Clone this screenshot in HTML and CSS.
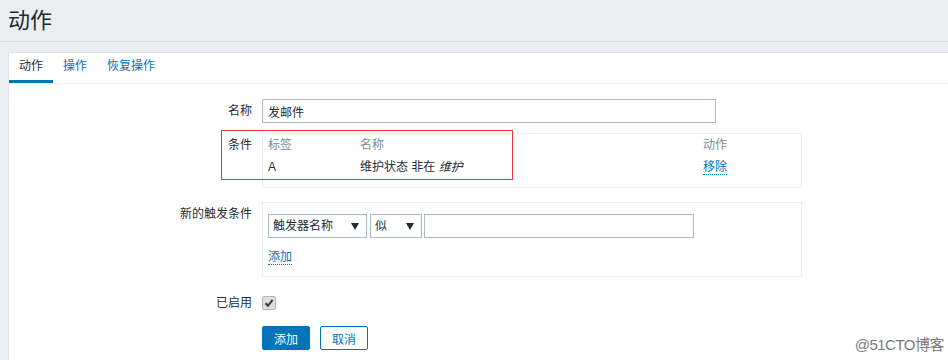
FILE: index.html
```html
<!DOCTYPE html>
<html lang="zh-CN">
<head>
    <meta charset="UTF-8">
    <title>动作</title>
    <link rel="stylesheet" href="styles.css">
</head>
<body>
    <div class="header">
        <h1>动作</h1>
    </div>
    <div class="panel">
        <ul class="tabs">
            <li class="active">动作</li>
            <li><a href="#">操作</a></li>
            <li><a href="#">恢复操作</a></li>
        </ul>
        <div class="form">
            <div class="row">
                <label class="lbl">名称</label>
                <div class="field"><input class="text name" type="text" value="发邮件"></div>
            </div>
            <div class="row gap14">
                <label class="lbl">条件</label>
                <div class="box cond">
                    <div class="tr th">
                        <span class="c1">标签</span>
                        <span class="c2">名称</span>
                        <span class="c3">动作</span>
                    </div>
                    <div class="tr">
                        <span class="c1">A</span>
                        <span class="c2">维护状态 非在 <i>维护</i></span>
                        <span class="c3"><a class="act" href="#">移除</a></span>
                    </div>
                </div>
            </div>
            <div class="row gap14">
                <label class="lbl">新的触发条件</label>
                <div class="box new">
                    <div class="selects">
                        <div class="select s1">触发器名称<span class="arrow"></span></div>
                        <div class="select s2">似<span class="arrow"></span></div>
                        <input class="text pattern" type="text" value="">
                    </div>
                    <div class="addline"><a class="act" href="#">添加</a></div>
                </div>
            </div>
            <div class="row gap11">
                <label class="lbl">已启用</label>
                <div class="field">
                    <span class="check">
                        <svg width="10" height="10" viewBox="0 0 10 10"><path d="M1.5 5.2 L4 7.8 L8.6 1.8" fill="none" stroke="#3a3a3a" stroke-width="2"/></svg>
                    </span>
                </div>
            </div>
            <div class="row">
                <span class="lbl"></span>
                <div class="buttons">
                    <button class="btn primary">添加</button>
                    <button class="btn alt">取消</button>
                </div>
            </div>
        </div>
    </div>
    <div class="mark"></div>
    <div class="watermark">@51CTO博客</div>
</body>
</html>
```

FILE: styles.css
```css
html,body{
    margin:0;
    height:360px;
    overflow:hidden;
}
body{
    background-color:#ebeef0;
    font-family:"Liberation Sans","Noto Sans CJK SC",sans-serif;
    font-size:12px;
    color:#1f2c33;
    position:relative;
}
a{
    color:#0275b8;
    text-decoration:none;
}
.header{
    height:41px;
    padding:0 8px;
    border-bottom:1px solid #dadfe2;
}
.header h1{
    margin:0;
    font-size:22px;
    font-weight:normal;
    line-height:41px;
}
.panel{
    box-sizing:border-box;
    margin:10px 0 0 8px;
    background-color:#fff;
    border:1px solid #dfe4e7;
    border-right:none;
    border-bottom:none;
    height:308px;
}
.tabs{
    list-style:none;
    margin:0;
    padding:0;
    display:flex;
    border-bottom:1px solid #ebeef0;
}
.tabs li{
    padding:0 10px;
    line-height:27px;
    border-bottom:3px solid transparent;
}
.tabs li.active{
    border-bottom-color:#0275b8;
}
.form{
    padding-top:15px;
}
.row{
    display:flex;
    align-items:flex-start;
    margin-bottom:10px;
}
.row.gap14{
    margin-bottom:14px;
}
.row.gap11{
    margin-bottom:11px;
}
.lbl{
    width:243px;
    padding-right:10px;
    text-align:right;
    line-height:24px;
    flex-shrink:0;
}
.field{
    height:24px;
    display:flex;
    align-items:center;
}
.text{
    box-sizing:border-box;
    height:24px;
    border:1px solid #acbbc2;
    padding:0 5px;
    font:inherit;
    color:#1f2c33;
    outline:none;
}
.text.name{
    width:454px;
}
.box{
    box-sizing:border-box;
    width:540px;
    border:1px solid #ebeef0;
}
.cond{
    padding:0 5px 9px;
}
.tr{
    display:flex;
    line-height:22px;
}
.tr.th{
    color:#768d99;
}
.c1{
    width:92px;
}
.c2{
    width:343px;
}
.c2 i{
    font-weight:normal;
}
.act{
    border-bottom:1px dotted #0275b8;
}
.new{
    padding:11px 5px 10px;
}
.selects{
    display:flex;
    height:24px;
}
.select{
    box-sizing:border-box;
    height:24px;
    border:1px solid #acbbc2;
    padding:0 4px;
    line-height:22px;
    position:relative;
    margin-right:3px;
}
.select.s1{
    width:99px;
}
.select.s2{
    width:52px;
    margin-right:2px;
}
.arrow{
    position:absolute;
    right:7px;
    top:8px;
    width:0;
    height:0;
    border-left:4px solid transparent;
    border-right:4px solid transparent;
    border-top:7px solid #1f2c33;
}
.text.pattern{
    width:270px;
}
.addline{
    margin-top:10px;
    line-height:18px;
}
.check{
    box-sizing:border-box;
    width:14px;
    height:14px;
    border:1px solid #b4b4b4;
    border-radius:2px;
    background-color:#dedede;
    display:flex;
    align-items:center;
    justify-content:center;
}
.buttons{
    display:flex;
}
.btn{
    box-sizing:border-box;
    width:48px;
    height:24px;
    font:inherit;
    border:1px solid #0275b8;
    border-radius:2px;
    padding:0;
    margin-right:10px;
}
.btn.primary{
    background-color:#0275b8;
    color:#fff;
}
.btn.alt{
    background-color:#fff;
    color:#0275b8;
}
.mark{
    position:absolute;
    left:221px;
    top:130px;
    width:292px;
    height:50px;
    box-sizing:border-box;
    border:1px solid #e8353a;
}
.watermark{
    position:absolute;
    right:4px;
    top:333px;
    font-size:15px;
    color:#7a7a7a;
    letter-spacing:-0.5px;
}
```
